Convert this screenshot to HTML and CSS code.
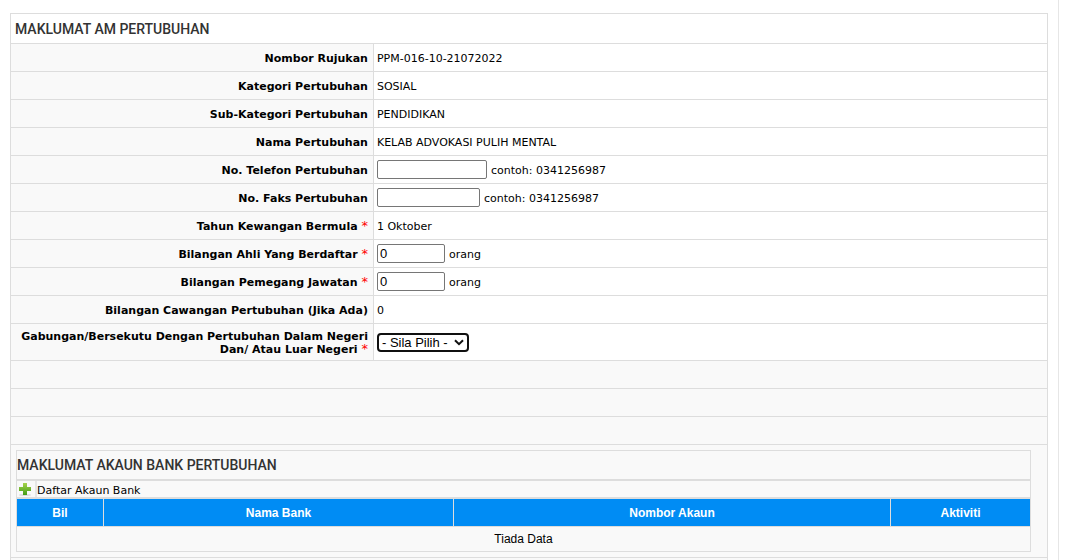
FILE: index.html
```html
<!DOCTYPE html>
<html lang="ms">
<head>
<meta charset="utf-8">
<title>Maklumat Am Pertubuhan</title>
<link rel="stylesheet" href="styles.css">
</head>
<body>
<main class="page">
  <table class="grid form">
    <colgroup><col class="col-label"><col></colgroup>
    <tbody>
      <tr class="title-row"><td colspan="2"><h2 class="title">MAKLUMAT AM PERTUBUHAN</h2></td></tr>
      <tr><th scope="row">Nombor Rujukan</th><td>PPM-016-10-21072022</td></tr>
      <tr><th scope="row">Kategori Pertubuhan</th><td>SOSIAL</td></tr>
      <tr><th scope="row">Sub-Kategori Pertubuhan</th><td>PENDIDIKAN</td></tr>
      <tr><th scope="row">Nama Pertubuhan</th><td>KELAB ADVOKASI PULIH MENTAL</td></tr>
      <tr><th scope="row"><label for="telefon">No. Telefon Pertubuhan</label></th><td class="control"><div class="field"><input class="box phone" id="telefon" type="text"><span class="hint">contoh: 0341256987</span></div></td></tr>
      <tr><th scope="row"><label for="faks">No. Faks Pertubuhan</label></th><td class="control"><div class="field"><input class="box fax" id="faks" type="text"><span class="hint">contoh: 0341256987</span></div></td></tr>
      <tr><th scope="row">Tahun Kewangan Bermula <span class="req">*</span></th><td>1 Oktober</td></tr>
      <tr><th scope="row"><label for="ahli">Bilangan Ahli Yang Berdaftar <span class="req">*</span></label></th><td class="control"><div class="field"><input class="box count" id="ahli" type="text" value="0"><span class="hint">orang</span></div></td></tr>
      <tr><th scope="row"><label for="jawatan">Bilangan Pemegang Jawatan <span class="req">*</span></label></th><td class="control"><div class="field"><input class="box count" id="jawatan" type="text" value="0"><span class="hint">orang</span></div></td></tr>
      <tr><th scope="row">Bilangan Cawangan Pertubuhan (Jika Ada)</th><td>0</td></tr>
      <tr class="tall"><th scope="row"><label for="gabungan">Gabungan/Bersekutu Dengan Pertubuhan Dalam Negeri Dan/ Atau Luar Negeri <span class="req">*</span></label></th>
        <td class="control"><div class="field"><span class="select-wrap"><select class="select" id="gabungan"><option>- Sila Pilih -</option><option>Ya</option><option>Tidak</option></select><svg class="chevron" viewBox="0 0 10 7" aria-hidden="true"><path d="M1 1.2 5 5.2 9 1.2" fill="none" stroke="#111" stroke-width="2"/></svg></span></div></td></tr>
      <tr class="blank"><td colspan="2"></td></tr>
      <tr class="blank"><td colspan="2"></td></tr>
      <tr class="blank"><td colspan="2"></td></tr>
      <tr class="blank"><td colspan="2" class="nest">
        <div class="bank-title"><h2 class="title">MAKLUMAT AKAUN BANK PERTUBUHAN</h2></div>
        <div class="toolbar">
          <span class="tool-icon"><svg viewBox="0 0 14 14" aria-hidden="true"><defs><linearGradient id="green" x1="0" y1="0" x2="0" y2="1"><stop offset="0" stop-color="#a6d24c"/><stop offset="1" stop-color="#439d16"/></linearGradient></defs><ellipse cx="7" cy="13" rx="6" ry="1" fill="#dcdcdc"/><path d="M5 1h4v4h4v4H9v4H5V9H1V5h4z" fill="url(#green)"/></svg></span>
          <button class="tool-button" type="button">Daftar Akaun Bank</button>
        </div>
        <table class="grid bank">
          <colgroup><col class="col-no"><col class="col-name"><col class="col-account"><col></colgroup>
          <thead><tr><th scope="col">Bil</th><th scope="col">Nama Bank</th><th scope="col">Nombor Akaun</th><th scope="col">Aktiviti</th></tr></thead>
          <tbody><tr><td colspan="4">Tiada Data</td></tr></tbody>
        </table>
      </td></tr>
      <tr class="blank"><td colspan="2"></td></tr>
    </tbody>
  </table>
</main>
</body>
</html>
```
FILE: styles.css
```css
* { box-sizing: border-box; }
html { scrollbar-width: none; }
body {
  margin: 0;
  background: #fff;
  color: #000;
  font: 11px/13px Verdana, "DejaVu Sans", sans-serif;
}
.page {
  min-height: 100vh;
  margin-right: 7px;
  padding: 13px 10px 0;
  border-right: 1px solid #e6e6e6;
}
.grid {
  width: 100%;
  border-collapse: collapse;
  table-layout: fixed;
}
.grid th, .grid td { border: 1px solid #ddd; }
.col-label { width: 35%; }
.form > tbody > tr { height: 28px; }
.form > tbody > .title-row { height: 30px; }
.form > tbody > .tall { height: 37px; }
.form > tbody > tr > td { padding: 2px 3px 0; }
.form > tbody > tr > .control { padding: 0 3px; }
.form > tbody > .title-row > td { padding: 0 4px; }
.form > tbody > tr > th {
  padding: 2px 5px 0;
  background: #f9f9f9;
  text-align: right;
}
.form > tbody > .blank > td { background: #f9f9f9; }
.title {
  margin: 0;
  color: #333;
  font: 500 14px/20px Roboto, sans-serif;
}
.req { color: #f00; font-size: 13px; font-weight: 400; line-height: 11px; }
.field { display: flex; align-items: center; gap: 4px; }
.hint { padding-top: 2px; }
.box {
  height: 19px;
  padding: 0 2px;
  border: 1px solid #767676;
  border-radius: 2px;
  background: #fff;
  font: 13px/15px "Liberation Sans", Arial, sans-serif;
}
.phone { width: 110px; }
.fax { width: 103px; }
.count { width: 68px; }
.select-wrap { display: grid; align-items: center; }
.select, .chevron { grid-area: 1 / 1; }
.select {
  appearance: none;
  width: 92px;
  height: 19px;
  padding: 0 3px;
  border: 2px solid #101010;
  border-radius: 4px;
  background: #fff;
  color: #000;
  font: 13px/15px "Liberation Sans", Arial, sans-serif;
}
.chevron {
  width: 10px;
  height: 7px;
  margin-right: 5px;
  justify-self: end;
  pointer-events: none;
}
.form > tbody > tr > .nest { padding: 5px 16px 5px 5px; }
.bank-title {
  height: 30px;
  padding: 4px 0;
  border: 1px solid #ddd;
}
.toolbar {
  display: flex;
  height: 18px;
  border: 1px solid #ddd;
}
.tool-icon {
  width: 20px;
  padding: 1px;
  border-right: 2px solid #e6e6e6;
}
.tool-icon svg { display: block; width: 14px; height: 14px; }
.tool-button {
  padding: 2px 0 0;
  border: 0;
  background: none;
  color: #000;
  font: inherit;
}
.bank { font: 12px/16px "Liberation Sans", Arial, sans-serif; }
.col-no { width: 87px; }
.col-name { width: 350px; }
.col-account { width: 437px; }
.bank th {
  height: 28px;
  padding: 0;
  background: #008cf4;
  color: #fff;
}
.bank td { height: 25px; padding: 0; text-align: center; }
```
